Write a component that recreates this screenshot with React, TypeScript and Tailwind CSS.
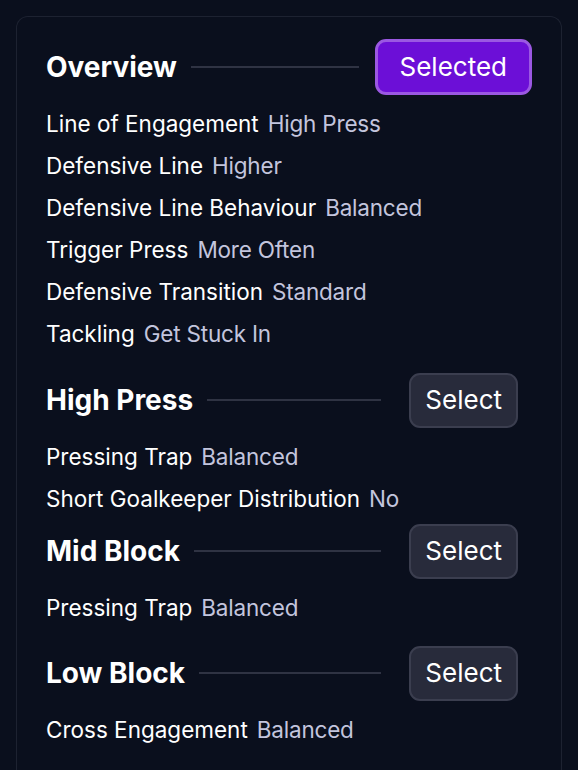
import React from "react";

interface Setting {
  label: string;
  value: string;
}

interface SectionProps {
  title: string;
  selected?: boolean;
  settings: Setting[];
  className?: string;
}

const Section: React.FC<SectionProps> = ({ title, selected = false, settings, className = "" }) => {
  return (
    <section className={className}>
      <div className={`flex items-center h-[56px] ${selected ? "pr-[0px]" : "pr-[14px]"}`}>
        <h2 className="text-[28px] font-bold text-white leading-none">{title}</h2>
        <div className={`flex-1 h-[2px] bg-[#2f3343] ml-[14px] ${selected ? "mr-[16px]" : "mr-[28px]"}`} />
        {selected ? (
          <button className="h-[56px] px-[22px] rounded-[11px] border-[3px] border-[#9b58e2] bg-[#6c0fd7] text-[26px] leading-none text-white">
            Selected
          </button>
        ) : (
          <button className="h-[55px] px-[14px] rounded-[11px] border-[2px] border-[#3b3e4f] bg-[#282b3b] text-[26px] leading-none text-white">
            Select
          </button>
        )}
      </div>
      <ul className="mt-[8px]">
        {settings.map((s) => (
          <li key={s.label} className="h-[42px] flex items-center gap-[9px] text-[22.5px]">
            <span className="text-white">{s.label}</span>
            <span className="text-[#c3c5dd] tracking-[-0.2px]">{s.value}</span>
          </li>
        ))}
      </ul>
    </section>
  );
};

export default function App() {
  return (
    <div
      className="min-h-screen w-full bg-[#0a0f1d] px-[16px] pt-[16px] overflow-hidden"
      style={{ fontFamily: "Inter, 'Noto Sans', sans-serif" }}
    >
      <div className="rounded-t-[12px] border border-b-0 border-[#1d2231] pl-[29px] pr-[29px] pt-[22px] pb-[40px]">
        <Section
          title="Overview"
          selected
          settings={[
            { label: "Line of Engagement", value: "High Press" },
            { label: "Defensive Line", value: "Higher" },
            { label: "Defensive Line Behaviour", value: "Balanced" },
            { label: "Trigger Press", value: "More Often" },
            { label: "Defensive Transition", value: "Standard" },
            { label: "Tackling", value: "Get Stuck In" },
          ]}
        />
        <Section
          title="High Press"
          className="mt-[17px]"
          settings={[
            { label: "Pressing Trap", value: "Balanced" },
            { label: "Short Goalkeeper Distribution", value: "No" },
          ]}
        />
        <Section
          title="Mid Block"
          className="mt-[3px]"
          settings={[{ label: "Pressing Trap", value: "Balanced" }]}
        />
        <Section
          title="Low Block"
          className="mt-[16px]"
          settings={[{ label: "Cross Engagement", value: "Balanced" }]}
        />
      </div>
    </div>
  );
}
